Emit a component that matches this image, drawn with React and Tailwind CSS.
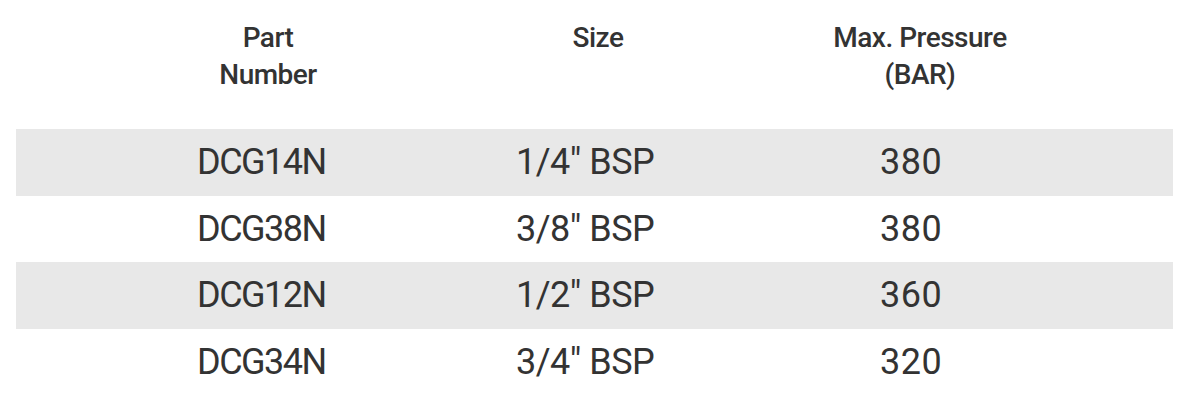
export default function App() {
  const rows = [
    ["DCG14N", '1/4" BSP', "380"],
    ["DCG38N", '3/8" BSP', "380"],
    ["DCG12N", '1/2" BSP', "360"],
    ["DCG34N", '3/4" BSP', "320"],
  ];
  const font = { fontFamily: 'Roboto, "Liberation Sans", Arial, sans-serif' };
  return (
    <div className="w-[1200px] h-[420px] bg-white text-[#333333]" style={font}>
      <div className="pl-[16px] pt-[19px]">
        <div className="grid grid-cols-[404px_380px_373px] text-[28px] leading-[37px] font-medium tracking-[-0.5px] whitespace-nowrap">
          <div className="ml-[152px] w-[200px] text-center">Part<br />Number</div>
          <div className="ml-[78px] w-[200px] text-center">Size</div>
          <div className="ml-[20px] w-[200px] text-center">Max. Pressure<br />(BAR)</div>
        </div>
        <div className="mt-[36px] w-[1157px] text-[36px]">
          {rows.map((r, i) => (
            <div
              key={i}
              className={`grid grid-cols-[404px_380px_373px] h-[66.5px] items-center ${i % 2 === 0 ? "bg-[#e8e8e8]" : "bg-white"}`}
            >
              <div className="pl-[181px] tracking-[-1.5px]">{r[0]}</div>
              <div className="pl-[96px] tracking-[-0.5px]">{r[1]}</div>
              <div className="pl-[80px] tracking-[0.5px]">{r[2]}</div>
            </div>
          ))}
        </div>
      </div>
    </div>
  );
}
